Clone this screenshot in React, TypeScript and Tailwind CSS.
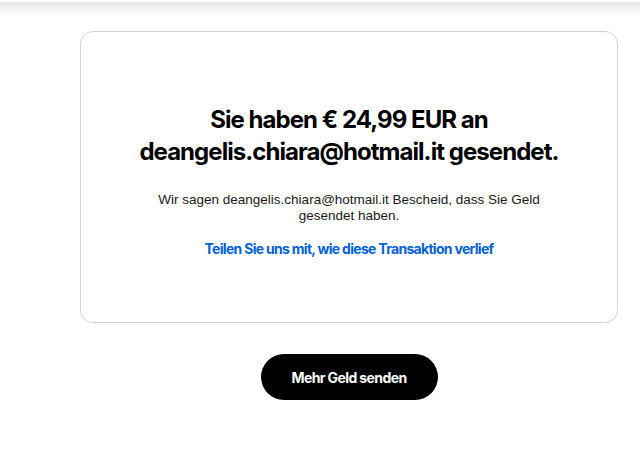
export default function App() {
  return (
    <div className="min-h-[467px] bg-white font-['Inter',sans-serif]">
      {/* header shadow */}
      <div className="h-[2px] bg-white" />
      <div className="h-[14px] bg-gradient-to-b from-[#e6e6e6] to-white" />

      <div className="ml-[80px] w-[538px] pt-[15px]">
        <div className="rounded-[13px] border border-[#d4d4d4] px-[40px] pt-[72px] pb-[62px] text-center">
          <h1 className="mx-auto max-w-[440px] text-[24px] leading-[32px] font-bold tracking-[-0.95px] text-black">
            Sie haben € 24,99 EUR an deangelis.chiara@hotmail.it gesendet.
          </h1>
          <p className="mx-auto mt-[24px] max-w-[400px] font-['Liberation_Sans',sans-serif] text-[13.5px] leading-[16px] text-[#1a1a1a]">
            Wir sagen deangelis.chiara@hotmail.it Bescheid, dass Sie Geld gesendet haben.
          </p>
          <a href="#" className="mt-[16px] inline-block text-[14px] leading-[18px] font-bold tracking-[-0.7px] text-[#0062d6]">
            Teilen Sie uns mit, wie diese Transaktion verlief
          </a>
        </div>

        <div className="mt-[31px] flex justify-center">
          <button className="h-[46px] w-[177px] rounded-full bg-black text-[14px] font-bold tracking-[-0.6px] text-white">
            Mehr Geld senden
          </button>
        </div>
      </div>
    </div>
  );
}
